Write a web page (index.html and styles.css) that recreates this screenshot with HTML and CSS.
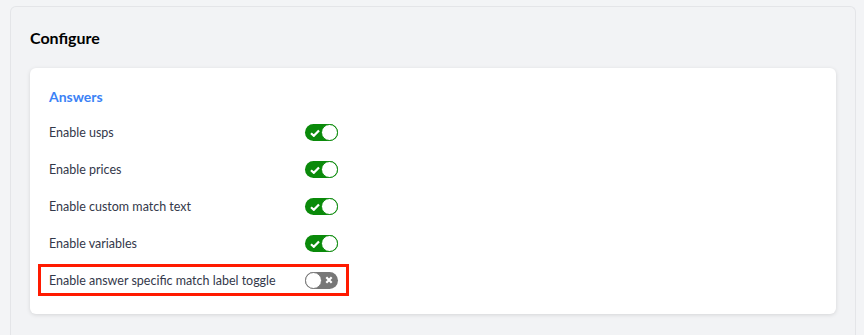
FILE: index.html
```html
<!DOCTYPE html>
<html>
<head>
<meta charset="utf-8">
<link rel="stylesheet" href="styles.css">
</head>
<body>
<div class="panel">
  <h2 class="title">Configure</h2>
  <div class="card">
    <h3 class="section">Answers</h3>
    <div class="row"><span class="label">Enable usps</span><span class="toggle on"><svg class="mark" width="10" height="8" viewBox="0 0 10 8"><path d="M1 4.2 L3.8 6.8 L9 1.4" fill="none" stroke="#fff" stroke-width="2.2"/></svg><span class="knob"></span></span></div>
    <div class="row"><span class="label">Enable prices</span><span class="toggle on"><svg class="mark" width="10" height="8" viewBox="0 0 10 8"><path d="M1 4.2 L3.8 6.8 L9 1.4" fill="none" stroke="#fff" stroke-width="2.2"/></svg><span class="knob"></span></span></div>
    <div class="row"><span class="label">Enable custom match text</span><span class="toggle on"><svg class="mark" width="10" height="8" viewBox="0 0 10 8"><path d="M1 4.2 L3.8 6.8 L9 1.4" fill="none" stroke="#fff" stroke-width="2.2"/></svg><span class="knob"></span></span></div>
    <div class="row"><span class="label">Enable variables</span><span class="toggle on"><svg class="mark" width="10" height="8" viewBox="0 0 10 8"><path d="M1 4.2 L3.8 6.8 L9 1.4" fill="none" stroke="#fff" stroke-width="2.2"/></svg><span class="knob"></span></span></div>
    <div class="row highlight"><span class="label">Enable answer specific match label toggle</span><span class="toggle off"><span class="knob"></span><svg class="mark" width="8" height="8" viewBox="0 0 8 8"><path d="M1.3 1.3 L6.7 6.7 M6.7 1.3 L1.3 6.7" fill="none" stroke="#fff" stroke-width="2.2"/></svg></span></div>
  </div>
</div>
</body>
</html>
```

FILE: styles.css
```css
html, body {
  margin: 0;
  padding: 0;
  background: #f3f4f6;
  font-family: Lato, "Open Sans", sans-serif;
}
body {
  padding: 6px 8px 0 10px;
  height: 335px;
  box-sizing: border-box;
  overflow: hidden;
}
.panel {
  border: 1px solid #e4e5e8;
  border-bottom: none;
  border-radius: 6px 6px 0 0;
  background: #f2f3f5;
  padding: 0 19px;
  height: 329px;
  box-sizing: border-box;
}
.title {
  margin: 0;
  padding-top: 20px;
  height: 41px;
  font-size: 16px;
  font-weight: 700;
  color: #000;
  line-height: 21px;
}
.card {
  display: flex;
  flex-direction: column;
  background: #fff;
  border-radius: 6px;
  box-shadow: 0 1px 4px rgba(0,0,0,0.12);
  padding: 19px 19px 18px 19px;
}
.section {
  margin: 0 0 7px 0;
  font-size: 14px;
  font-weight: 700;
  color: #3b82f6;
  line-height: 20px;
}
.row {
  display: flex;
  align-items: center;
  height: 37px;
}
.label {
  width: 256px;
  font-size: 12.5px;
  color: #33384a;
}
.highlight {
  align-self: flex-start;
  margin: 2px 0 0 -11px;
  padding: 0 8px;
  height: 32px;
  box-sizing: border-box;
  border: 3px solid #ff1a00;
}
.toggle {
  display: inline-flex;
  align-items: center;
  justify-content: space-between;
  width: 33px;
  height: 17px;
  border-radius: 9px;
  box-sizing: border-box;
}
.toggle.on {
  background: #0a8a0a;
  padding: 0 0 0 5px;
}
.toggle.off {
  background: #777;
  padding: 0 5px 0 0;
}
.knob {
  width: 17px;
  height: 17px;
  border-radius: 50%;
  background: #fff;
  box-sizing: border-box;
}
.toggle.on .knob {
  border: 1.5px solid #0a8a0a;
}
.toggle.off .knob {
  border: 1.5px solid #777;
}
.mark {
  display: block;
}
```
